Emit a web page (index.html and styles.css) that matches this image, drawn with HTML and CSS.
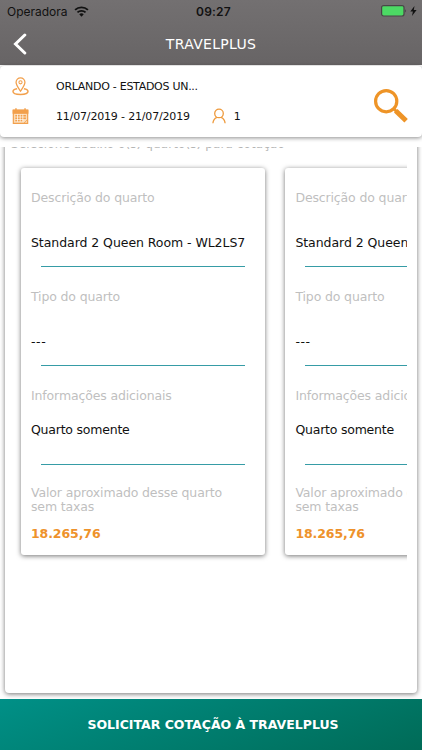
FILE: index.html
```html
<!DOCTYPE html>
<html lang="pt-BR">
<head>
    <meta charset="UTF-8">
    <meta name="viewport" content="width=device-width, initial-scale=1.0">
    <title>TravelPlus</title>
    <link rel="stylesheet" href="styles.css">
</head>
<body>
    <header>
        <div class="status-bar">
            <div class="carrier">
                <span>Operadora</span>
                <svg class="wifi" viewBox="0 0 14 10">
                    <path d="M1 3.5a8.7 8.7 0 0 1 12 0M3.2 5.9a5.5 5.5 0 0 1 7.6 0" fill="none" stroke="#111" stroke-width="1.7"/>
                    <path d="M4.9 7.6a3.1 3.1 0 0 1 4.2 0L7 9.8z" fill="#111"/>
                </svg>
            </div>
            <span class="clock">09:27</span>
            <div class="power">
                <svg class="battery" viewBox="0 0 26 12">
                    <rect x=".6" y=".6" width="22.4" height="10.4" rx="2" fill="#4cd964" stroke="#494447" stroke-width="1.2"/>
                    <path d="M24.2 4.2c1.2.5 1.2 2.7 0 3.2z" fill="#494447"/>
                </svg>
                <svg class="bolt" viewBox="0 0 7 10"><path d="M4.5 0L.3 5.6h2.6L2 10l4.6-5.9H3.8z" fill="#111"/></svg>
            </div>
        </div>
        <div class="nav-bar">
            <svg class="back" viewBox="0 0 14 22"><path d="M11.8 2L2.5 11l9.3 9" fill="none" stroke="#fff" stroke-width="3" stroke-linecap="round"/></svg>
            <h1>TRAVELPLUS</h1>
        </div>
    </header>

    <section class="search">
        <div class="search-info">
            <div class="search-row">
                <svg class="icon" viewBox="0 0 16 18" fill="none" stroke="#f2a04c">
                    <path d="M8 13.4C6 10.5 3.8 7.6 3.8 5a4.2 4.2 0 0 1 8.4 0c0 2.6-2.2 5.5-4.2 8.4z" stroke-width="1.2"/>
                    <circle cx="8" cy="5" r="1.5"/>
                    <path d="M4.8 11.1C2.5 11.5.9 12.5.9 13.7c0 1.6 3.1 2.8 7.1 2.8s7.1-1.2 7.1-2.8c0-1.2-1.6-2.2-3.9-2.6" stroke-width="1.4"/>
                </svg>
                <span class="destination">ORLANDO - ESTADOS UN...</span>
            </div>
            <div class="search-row">
                <svg class="icon" viewBox="0 0 16 18" fill="none" stroke="#f2a04c">
                    <path d="M1.2 2.9h13.6v12.6H1.2z" fill="#fbdcb9" stroke-width="1.1"/>
                    <path d="M1 3h14v3H1z" fill="#f2a04c"/>
                    <path d="M3.7 1.2v3M12.3 1.2v3M3.1 8.3h10M3.1 10.6h10M3.1 12.9h7" stroke-width="1.4"/>
                    <path d="M5.2 7v7M7.7 7v7M10.2 7v7" stroke="#fff" stroke-width=".7"/>
                    <path d="M11.4 15.2l3.2-3.2" stroke-width=".8"/>
                </svg>
                <span class="dates">11/07/2019 - 21/07/2019</span>
                <svg class="person" viewBox="0 0 14 16" fill="none" stroke="#ee9a3d" stroke-width="1.3">
                    <circle cx="7" cy="5.4" r="4.3"/>
                    <path d="M.9 15.2c.3-3 1.7-4.9 4-5.9M13.1 15.2c-.3-3-1.7-4.9-4-5.9"/>
                </svg>
                <span class="guests">1</span>
            </div>
        </div>
        <svg class="magnifier" viewBox="0 0 36 36" fill="none" stroke="#ee9427">
            <circle cx="13.2" cy="13.2" r="10.6" stroke-width="3.2"/>
            <path d="M21 21l2.5 2.5" stroke-width="3"/>
            <path d="M22.7 22.7l10.4 10.1" stroke-width="5"/>
        </svg>
    </section>

    <main>
        <div class="panel">
            <p class="hint">Selecione abaixo o(s) quarto(s) para cotação</p>
            <div class="rooms">
                <article class="room">
                    <div class="field">
                        <h2>Descrição do quarto</h2>
                        <p class="room-name">Standard 2 Queen Room - WL2LS7</p>
                    </div>
                    <div class="field">
                        <h2>Tipo do quarto</h2>
                        <p class="room-type">---</p>
                    </div>
                    <div class="field extra">
                        <h2>Informações adicionais</h2>
                        <p>Quarto somente</p>
                    </div>
                    <div class="total">
                        <h2>Valor aproximado desse quarto sem taxas</h2>
                        <strong>18.265,76</strong>
                    </div>
                </article>
                <article class="room">
                    <div class="field">
                        <h2>Descrição do quarto</h2>
                        <p class="room-name">Standard 2 Queen Room - WL2LS7</p>
                    </div>
                    <div class="field">
                        <h2>Tipo do quarto</h2>
                        <p class="room-type">---</p>
                    </div>
                    <div class="field extra">
                        <h2>Informações adicionais</h2>
                        <p>Quarto somente</p>
                    </div>
                    <div class="total">
                        <h2>Valor aproximado desse quarto sem taxas</h2>
                        <strong>18.265,76</strong>
                    </div>
                </article>
            </div>
        </div>
    </main>

    <button class="submit">SOLICITAR COTAÇÃO À TRAVELPLUS</button>
</body>
</html>
```

FILE: styles.css
```css
* {
    box-sizing: border-box;
}
body {
    margin: 0;
    height: 750px;
    display: flex;
    flex-direction: column;
    overflow: hidden;
    background-color: #fff;
    color: #111;
    font-family: Verdana, 'DejaVu Sans', sans-serif;
}
h1, h2, p {
    margin: 0;
    font-weight: normal;
}
svg {
    display: block;
    flex: none;
}
header {
    height: 65px;
    flex: none;
    background: linear-gradient(#737071, #676465);
}
.status-bar {
    height: 22px;
    padding: 0 5px 0 7px;
    display: grid;
    grid-template-columns: 1fr auto 1fr;
    align-items: center;
    font-family: Inter, sans-serif;
    font-size: 12px;
}
.carrier {
    display: flex;
    align-items: center;
    gap: 6px;
}
.wifi {
    width: 15px;
    height: 11px;
}
.clock {
    padding-left: 3px;
    font-weight: 600;
    font-size: 12px;
    letter-spacing: 0.2px;
}
.power {
    display: flex;
    justify-content: flex-end;
    align-items: center;
    gap: 3px;
}
.battery {
    width: 26px;
    height: 12px;
}
.bolt {
    width: 7px;
    height: 10px;
}
.nav-bar {
    height: 43px;
    padding: 0 13px;
    display: grid;
    grid-template-columns: 14px 1fr 14px;
    align-items: center;
}
.back {
    width: 14px;
    height: 22px;
}
h1 {
    color: #fff;
    font-size: 14px;
    letter-spacing: 0.3px;
    text-align: center;
}
.search {
    height: 71px;
    flex: none;
    margin-top: 1px;
    padding: 5px 13px 0 12px;
    display: flex;
    justify-content: space-between;
    border-radius: 4px;
    box-shadow: 0 1px 4px rgba(0, 0, 0, 0.45);
}
.search-row {
    height: 30px;
    display: flex;
    align-items: center;
    font-size: 11px;
}
.destination {
    letter-spacing: -0.28px;
}
.dates {
    letter-spacing: -0.17px;
}
.icon {
    width: 17px;
    height: 19px;
    margin-right: 27px;
}
.person {
    width: 14px;
    height: 16px;
    margin: 0 8px 0 22px;
}
.magnifier {
    width: 36px;
    height: 36px;
    margin-top: 17px;
}
main {
    height: 552px;
    flex: none;
    margin-top: 10px;
    padding: 0 5px 6px;
    overflow: hidden;
}
.panel {
    height: 566px;
    margin-top: -20px;
    padding: 9px 10px 0 6px;
    border-radius: 4px;
    box-shadow: 0 1px 5px rgba(0, 0, 0, 0.55);
}
.hint {
    height: 20px;
    color: #b5b5b5;
    font-size: 12px;
    line-height: 16px;
    letter-spacing: 0.1px;
    white-space: nowrap;
}
.rooms {
    margin-left: 2px;
    padding: 12px 0 8px 8px;
    display: flex;
    gap: 20.4px;
    overflow: hidden;
}
.room {
    width: 244px;
    height: 387px;
    flex: none;
    padding: 23px 10px 0;
    border-radius: 3px;
    box-shadow: 0 1px 5px rgba(0, 0, 0, 0.55);
    font-size: 12.5px;
    line-height: 14px;
}
h2 {
    color: #bfbfbf;
    font-size: 12.5px;
    letter-spacing: -0.14px;
}
.field {
    height: 98.8px;
}
.field p {
    height: 48px;
    padding-top: 31px;
    letter-spacing: -0.22px;
    white-space: nowrap;
}
.field .room-name {
    letter-spacing: -0.06px;
}
.field .room-type {
    letter-spacing: 0.6px;
}
.field::after {
    content: "";
    display: block;
    height: 1px;
    margin: 13px 10px 0;
    background-color: #369ca6;
}
.field.extra p {
    padding-top: 20px;
}
.total {
    margin-top: -1px;
    padding-right: 20px;
}
.total strong {
    display: block;
    margin-top: 13px;
    color: #ee922b;
    letter-spacing: -0.1px;
}
.submit {
    flex: 1;
    padding: 0 4px 0 8px;
    border: none;
    background: linear-gradient(160deg, #009087, #006b57);
    color: #fff;
    font-family: inherit;
    font-size: 12.5px;
    font-weight: bold;
    cursor: pointer;
}
```
